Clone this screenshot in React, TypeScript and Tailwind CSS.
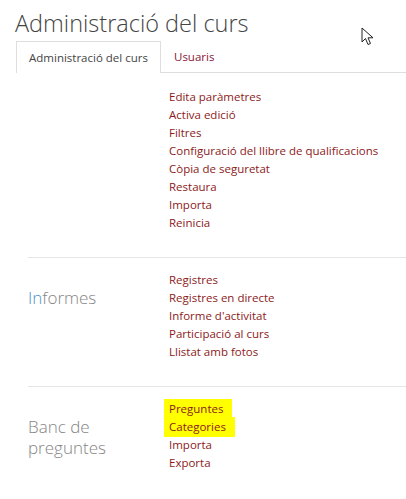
import React from 'react';

const font = { fontFamily: '"Open Sans", "Noto Sans", sans-serif' };

const sections: { title: React.ReactNode; links: { label: string; hl?: boolean }[]; }[] = [
  {
    title: '',
    links: [
      { label: 'Edita paràmetres' },
      { label: 'Activa edició' },
      { label: 'Filtres' },
      { label: 'Configuració del llibre de qualificacions' },
      { label: 'Còpia de seguretat' },
      { label: 'Restaura' },
      { label: 'Importa' },
      { label: 'Reinicia' },
    ],
  },
  {
    title: (
      <>
        <span className="text-[#4f8fc4]">In</span>formes
      </>
    ),
    links: [
      { label: 'Registres' },
      { label: 'Registres en directe' },
      { label: "Informe d'activitat" },
      { label: 'Participació al curs' },
      { label: 'Llistat amb fotos' },
    ],
  },
  {
    title: (
      <>
        Banc de
        <br />
        preguntes
      </>
    ),
    links: [
      { label: 'Preguntes', hl: true },
      { label: 'Categories', hl: true },
      { label: 'Importa' },
      { label: 'Exporta' },
    ],
  },
];

const Cursor = () => (
  <svg width="14" height="20" viewBox="0 0 14 20" className="absolute left-[361px] top-[27px]">
    <path d="M1 1 L1 15 L4.5 11.5 L7 17.5 L9.5 16.5 L7 10.8 L12 10.8 Z" fill="white" stroke="#222" strokeWidth="1" strokeLinejoin="miter" />
  </svg>
);

export default function App() {
  return (
    <div className="relative w-[406px] h-[499px] bg-white overflow-hidden" style={font}>
      <Cursor />
      <h1 className="pl-[15px] pt-[7px] text-[23.5px] leading-[32px] font-light text-[#444]">
        Administració del curs
      </h1>
      <div className="mt-[2px] ml-[16px] flex border-b border-[#dedede] h-[32px]">
        <div className="w-[145px] border border-b-0 border-[#dedede] bg-white -mb-px flex items-center justify-center text-[11.5px] text-[#444]">
          Administració del curs
        </div>
        <div className="px-[13px] flex items-center text-[11.5px] text-[#8a1538]">Usuaris</div>
      </div>

      <div className="ml-[28px]">
        {sections.map((s, i) => (
          <div key={i} className={i > 0 ? 'border-t border-[#e5e5e5]' : ''}>
            <div className={`flex items-start ${i === 0 ? 'pt-[15px] pb-[25px]' : i === 1 ? 'pt-[13px] pb-[25px]' : 'pt-[13px] pb-[20px]'}`}>
              <div className="w-[141px] mt-[16px] text-[17px] leading-[21px] font-light text-[#858585]">
                {s.title}
              </div>
              <ul className="flex flex-col">
                {s.links.map((l) => (
                  <li key={l.label} className="h-[18px] flex items-center text-[11.5px] text-[#8c1a1a]">
                    {l.hl ? (
                      <span className="bg-[#ffff00] -ml-[5px] pl-[5px] pr-[9px] py-px">{l.label}</span>
                    ) : (
                      l.label
                    )}
                  </li>
                ))}
              </ul>
            </div>
          </div>
        ))}
      </div>
    </div>
  );
}
